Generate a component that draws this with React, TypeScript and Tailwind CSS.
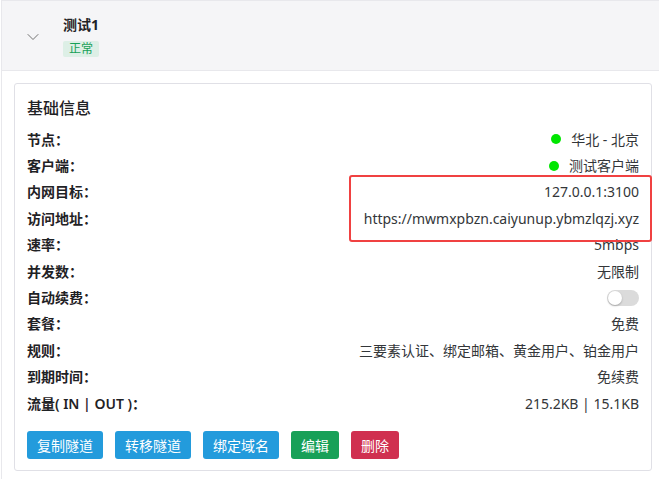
import { ChevronDown } from "lucide-react";

const rows: { label: string; value: React.ReactNode }[] = [
  { label: "节点：", value: <Dot text="华北 - 北京" /> },
  { label: "客户端：", value: <Dot text="测试客户端" /> },
  { label: "内网目标：", value: "127.0.0.1:3100" },
  { label: "访问地址：", value: "https://mwmxpbzn.caiyunup.ybmzlqzj.xyz" },
  { label: "速率：", value: "5mbps" },
  { label: "并发数：", value: "无限制" },
  { label: "自动续费：", value: <Toggle /> },
  { label: "套餐：", value: "免费" },
  { label: "规则：", value: "三要素认证、绑定邮箱、黄金用户、铂金用户" },
  { label: "到期时间：", value: "免续费" },
  { label: "流量( IN | OUT )：", value: "215.2KB | 15.1KB" },
];

function Dot({ text }: { text: string }) {
  return (
    <span className="flex items-center gap-[10px]">
      <span className="h-[10px] w-[10px] rounded-full bg-[#00e600]" />
      {text}
    </span>
  );
}

function Toggle() {
  return (
    <span className="flex h-[16px] w-[32px] items-center rounded-full bg-[#dbdbdb] px-[1px]">
      <span className="h-[14px] w-[14px] rounded-full bg-white shadow-[0_1px_2px_rgba(0,0,0,0.25)]" />
    </span>
  );
}

const buttons = [
  { text: "复制隧道", cls: "bg-[#239bdc]" },
  { text: "转移隧道", cls: "bg-[#239bdc]" },
  { text: "绑定域名", cls: "bg-[#239bdc]" },
  { text: "编辑", cls: "bg-[#18a058]" },
  { text: "删除", cls: "bg-[#d03050]" },
];

export default function App() {
  return (
    <div className="min-h-screen bg-white font-['Noto_Sans','Noto_Sans_CJK_SC',sans-serif] text-[14px] text-[#333639]">
      <div className="ml-px border-l border-t border-[#e8e8ec]">
        {/* cabecera */}
        <div className="flex h-[70px] items-center border-b border-[#e8e8ec] bg-[#f5f5f7]">
          <div className="flex w-[61px] justify-center pt-[2px]">
            <ChevronDown size={20} strokeWidth={1.1} className="text-[#666]" />
          </div>
          <div className="flex flex-col gap-[6px]">
            <div className="text-[14px] leading-[20px] font-bold text-[#1f2225]">测试1</div>
            <span className="w-fit rounded-[2px] bg-[#ddefe6] px-[6px] text-[12px] leading-[16px] text-[#18a058]">
              正常
            </span>
          </div>
        </div>

        {/* cuerpo */}
        <div className="pt-[12px] pr-[7px] pb-[8px] pl-[12px]">
          <div className="relative rounded-[3px] border border-[#e0e0e6] px-[12px] pt-[12px] pb-[11px]">
            <div className="text-[16px] leading-[24px] font-medium text-[#1f2225]">基础信息</div>
            <div className="mt-[6px]">
              {rows.map((r) => (
                <div key={r.label} className="flex h-[26.4px] items-center justify-between">
                  <span className="font-semibold text-[#1f2225]">{r.label}</span>
                  <span>{r.value}</span>
                </div>
              ))}
            </div>
            <div className="mt-[15px] flex gap-[12px]">
              {buttons.map((b) => (
                <button
                  key={b.text}
                  className={`h-[28px] rounded-[3px] px-[10px] text-[14px] text-white ${b.cls}`}
                >
                  {b.text}
                </button>
              ))}
            </div>

            {/* marca roja */}
            <div className="pointer-events-none absolute top-[91px] left-[334px] h-[67px] w-[303px] rounded-[3px] border-2 border-[#f04141]" />
          </div>
        </div>
      </div>
    </div>
  );
}
